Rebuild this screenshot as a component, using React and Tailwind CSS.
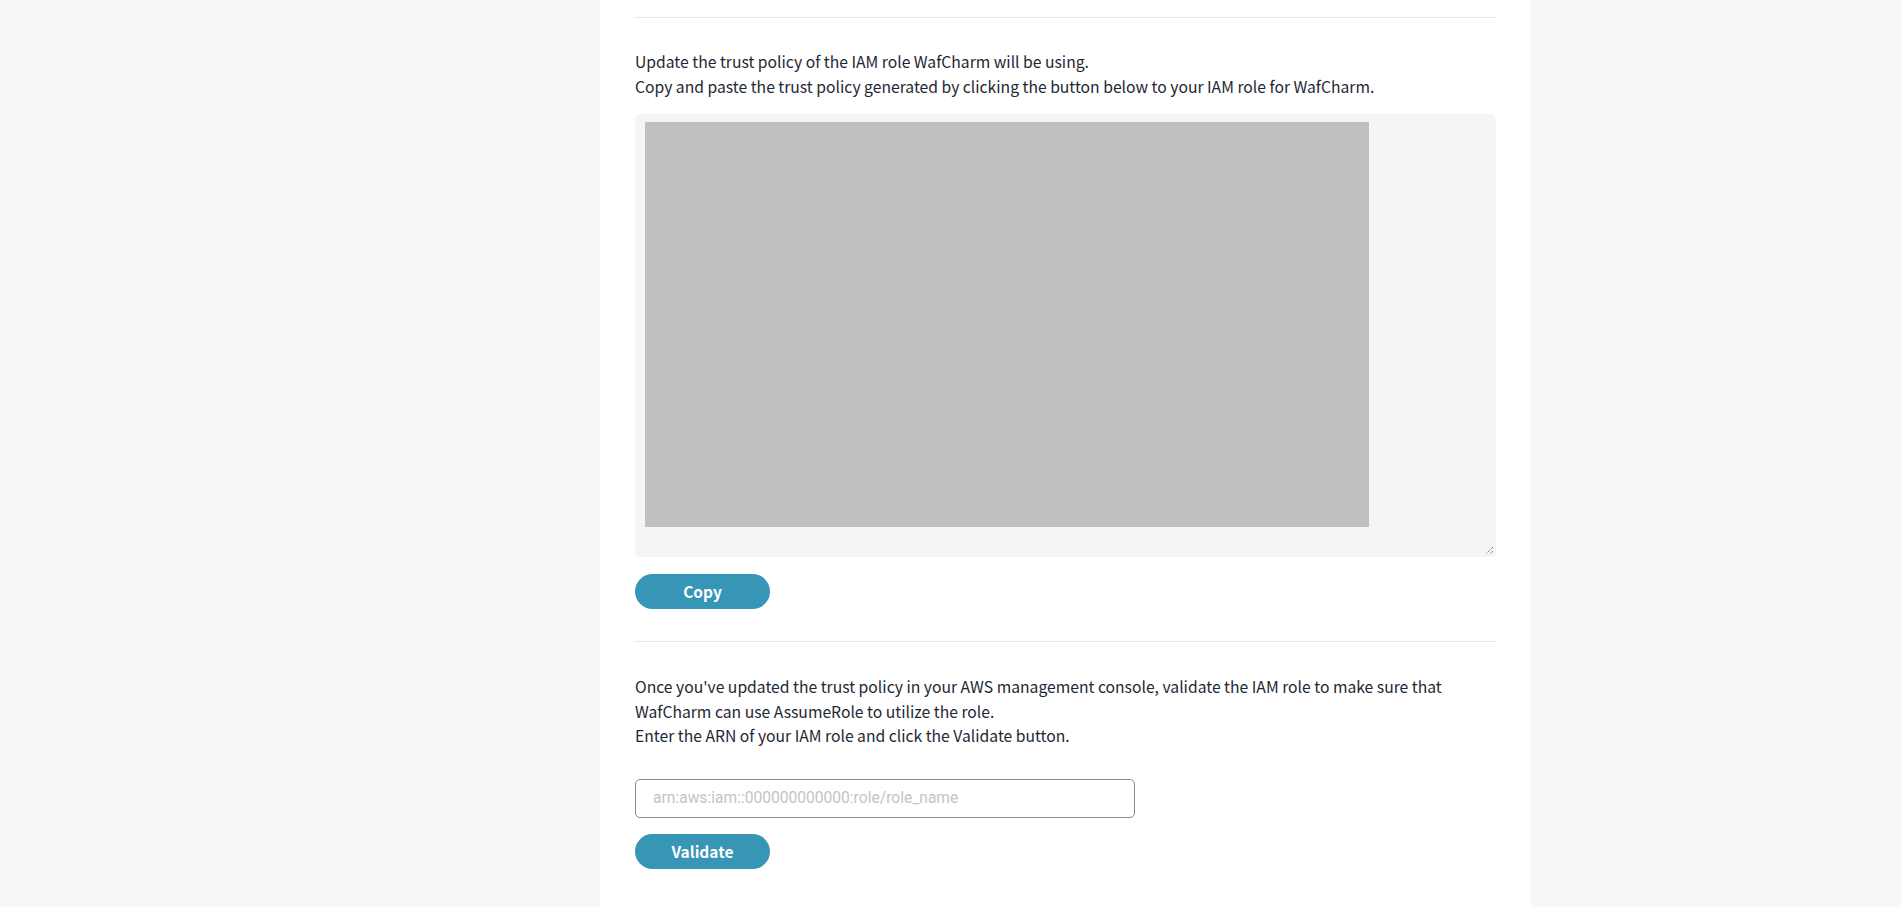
import React from "react";

export default function App() {
  const font = { fontFamily: '"Noto Sans CJK JP", "Noto Sans", sans-serif' };
  return (
    <div className="min-h-[907px] w-full bg-[#f7f7f7] flex" style={font}>
      <div className="w-[600px] shrink-0" />
      <div className="w-[931px] shrink-0 bg-white px-[35px] pt-[17px] pb-[39px] text-[15.7px] leading-[24.5px] text-[#1e2733]">
        <div className="h-px bg-[#e4e6ea]" />
        <div className="mt-[32px]">
          <p>Update the trust policy of the IAM role WafCharm will be using.</p>
          <p>Copy and paste the trust policy generated by clicking the button below to your IAM role for WafCharm.</p>
        </div>
        <div className="relative mt-[15px] h-[443px] rounded-[5px] bg-[#f5f5f5] pt-[8px] pl-[10px]">
          <div className="h-[405px] w-[724px] bg-[#c0c0c0]" />
          <svg className="absolute right-[2px] bottom-[2px]" width="9" height="9" viewBox="0 0 9 9">
            <path d="M8 1 L1 8 M8 5 L5 8" stroke="#555" strokeWidth="1" strokeDasharray="1 1" />
          </svg>
        </div>
        <button className="mt-[17px] flex h-[35px] w-[135px] items-center justify-center rounded-full bg-[#3795b5] text-[15.5px] font-semibold text-white">
          Copy
        </button>
        <div className="mt-[32px] h-px bg-[#e4e6ea]" />
        <div className="mt-[33px]">
          <p>Once you've updated the trust policy in your AWS management console, validate the IAM role to make sure that</p>
          <p>WafCharm can use AssumeRole to utilize the role.</p>
          <p>Enter the ARN of your IAM role and click the Validate button.</p>
        </div>
        <input
          className="mt-[30px] block h-[39px] w-[500px] rounded-[5px] border border-[#8a8a8a] pl-[17px] text-[15.6px] outline-none placeholder:text-[#c4c4c4]"
          placeholder="arn:aws:iam::000000000000:role/role_name"
          style={{ fontFamily: 'Roboto, "Noto Sans", sans-serif' }}
        />
        <button className="mt-[16px] flex h-[35px] w-[135px] items-center justify-center rounded-full bg-[#3795b5] text-[15.5px] font-semibold text-white">
          Validate
        </button>
      </div>
    </div>
  );
}
